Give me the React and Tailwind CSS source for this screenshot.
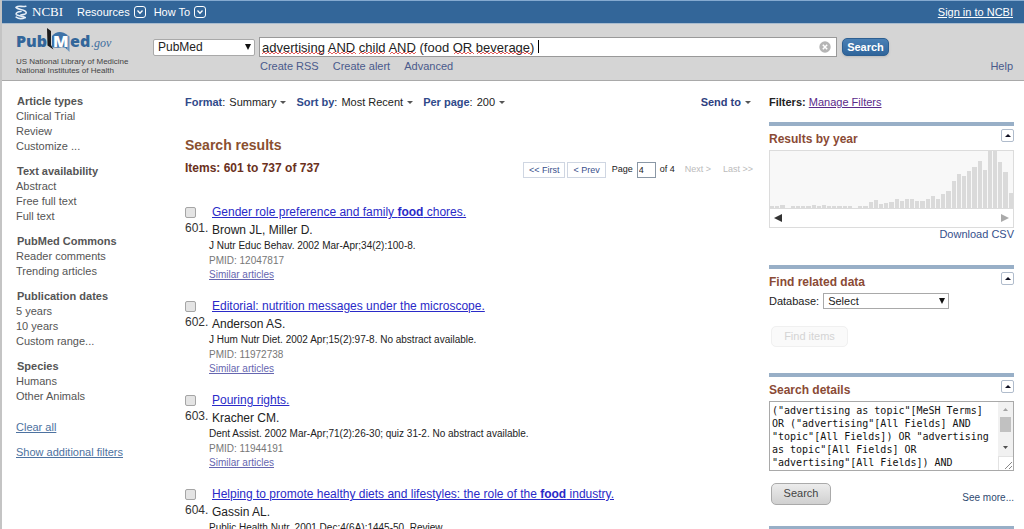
const filterGroups = [
  { title: "Article types", items: ["Clinical Trial", "Review", "Customize ..."] },
  { title: "Text availability", items: ["Abstract", "Free full text", "Full text"] },
  { title: "PubMed Commons", items: ["Reader comments", "Trending articles"] },
  { title: "Publication dates", items: ["5 years", "10 years", "Custom range..."] },
  { title: "Species", items: ["Humans", "Other Animals"] },
];

const articles = [
  {
    number: 601,
    title: ["Gender role preference and family ", "food", " chores."],
    authors: "Brown JL, Miller D.",
    citation: "J Nutr Educ Behav. 2002 Mar-Apr;34(2):100-8.",
    pmid: "12047817",
  },
  {
    number: 602,
    title: ["Editorial: nutrition messages under the microscope."],
    authors: "Anderson AS.",
    citation: "J Hum Nutr Diet. 2002 Apr;15(2):97-8. No abstract available.",
    pmid: "11972738",
  },
  {
    number: 603,
    title: ["Pouring rights."],
    authors: "Kracher CM.",
    citation: "Dent Assist. 2002 Mar-Apr;71(2):26-30; quiz 31-2. No abstract available.",
    pmid: "11944191",
  },
  {
    number: 604,
    title: [
      "Helping to promote healthy diets and lifestyles: the role of the ",
      "food",
      " industry.",
    ],
    authors: "Gassin AL.",
    citation: "Public Health Nutr. 2001 Dec;4(6A):1445-50. Review.",
  },
];

// one bar per year, oldest first
const yearCounts = [
  2, 2, 3, 0, 2, 2, 2, 2, 3, 2, 3, 2, 2, 2, 2, 2, 0, 2, 2, 6, 8, 4, 5, 6, 9, 7,
  9, 9, 7, 7, 9, 12, 9, 14, 17, 27, 34, 32, 37, 41, 47, 38, 57, 57, 46, 36, 15,
];
const maxCount = 57;

const searchDetails = `("advertising as topic"[MeSH Terms]
OR ("advertising"[All Fields] AND
"topic"[All Fields]) OR "advertising
as topic"[All Fields] OR
"advertising"[All Fields]) AND`;

// [start, end] of each word marked by the spell checker
const misspelled = [
  [3, 66],
  [69, 97],
  [100, 127],
  [131, 158],
  [195, 215],
  [218, 273],
];

function squiggle([start, end]) {
  let d = `M${start} 2`;
  for (let x = start + 2, up = true; x <= end; x += 2, up = !up) {
    d += `L${x} ${up ? 0 : 2}`;
  }
  return d;
}

function Caret() {
  return (
    <svg viewBox="0 0 6 3" className="ml-1 h-[3px] w-1.5" aria-hidden="true">
      <path d="M0 0h6L3 3z" fill="#555" />
    </svg>
  );
}

function SelectArrow() {
  return (
    <svg
      viewBox="0 0 6 6"
      className="pointer-events-none absolute top-1/2 right-1 size-1.5 -translate-y-1/2"
      aria-hidden="true"
    >
      <path d="M0 0h6L3 6z" fill="#111" />
    </svg>
  );
}

function MenuButton({ children }) {
  return (
    <button type="button" className="flex items-center gap-1 text-[11px] text-white">
      {children}
      <svg viewBox="0 0 12 12" className="size-3" fill="none" stroke="#fff" aria-hidden="true">
        <rect x="0.5" y="0.5" width="11" height="11" rx="2.5" />
        <path d="M3.5 4.5L6 7.2l2.5-2.7" strokeWidth="1.3" />
      </svg>
    </button>
  );
}

function NcbiLogo() {
  return (
    <a href="#ncbi" className="flex items-center gap-1 font-['Liberation_Serif',serif] text-[13px] text-white">
      <svg viewBox="0 0 14 16" className="h-4 w-3.5" fill="none" stroke="#e6eef7" strokeWidth="1.6" strokeLinecap="round" aria-hidden="true">
        <path d="M2.2 3.4C4.600 1 7.500 3.200 11.800 2.200" />
        <path d="M2.200 3.400C3.400 6 11.600 5 12.200 8.600c.2 1.700-2.700 2.200-5.400 2.400" />
        <path d="M7 7.500C4 7.600 1.700 8.800 2.200 10.300c.8 2 6.600 1.200 9 3.200" />
        <path d="M2.200 13.200c2.600 1.800 6.200 1.700 9 .3" />
      </svg>
      NCBI
    </a>
  );
}

function PubMedLogo() {
  return (
    <a href="#pubmed" className="block" aria-label="PubMed.gov">
      <svg viewBox="0 0 98 26" className="h-[26px] w-[98px]">
        <path d="M31 0l4 3v14l2.500 4.500-6-4z" fill="#1b1b1b" />
        <path d="M36 8c4-5 10-5.500 15.500-1v15c-2-2.500-4-3-7-2.500-3 .5-6 0-8.500 0z" fill="#3f73a8" />
        <path d="M51.500 7l2 1.500v15.500l-2-2z" fill="#6d95bd" />
        <text x="0" y="19" fontFamily="'Open Sans', sans-serif" fontWeight="800" fontSize="16" fill="#33669a">Pub</text>
        <text x="37" y="19" fontFamily="'Open Sans', sans-serif" fontWeight="800" fontSize="16" fill="#fff">M</text>
        <text x="54" y="19" fontFamily="'Open Sans', sans-serif" fontWeight="800" fontSize="16" fill="#33669a">ed</text>
        <text x="75" y="19" fontFamily="'Liberation Serif', serif" fontStyle="italic" fontSize="12" fill="#3f6f9f">.gov</text>
      </svg>
    </a>
  );
}

function Header() {
  return (
    <header className="border-b border-[#a9a9a9] bg-[#d5d5d5]">
      <div className="flex h-6 items-center justify-between border-y border-t-[#85aad0] border-b-[#a9bccf] bg-[#336699] pr-[11px] pl-3">
        <nav className="flex items-center">
          <NcbiLogo />
          <div className="ml-3.5 flex gap-2">
            <MenuButton>Resources</MenuButton>
            <MenuButton>How To</MenuButton>
          </div>
        </nav>
        <a href="#signin" className="text-[11px] text-white underline">
          Sign in to NCBI
        </a>
      </div>

      <div className="flex h-14 pr-[11px] pl-3.5">
        <div className="w-[137px] shrink-0 pt-1 text-[8px] leading-[9px] text-[#444]">
          <PubMedLogo />
          <p className="mt-[3px] whitespace-nowrap">US National Library of Medicine</p>
          <p className="whitespace-nowrap">National Institutes of Health</p>
        </div>

        <form className="flex-1 pt-[13px]" onSubmit={(e) => e.preventDefault()}>
          <div className="mr-[124px] flex items-center gap-1">
            <div className="relative w-[102px] shrink-0">
              <select
                aria-label="Database to search"
                className="block h-[17px] w-full appearance-none rounded-xs border border-[#a9a9a9] bg-white pl-1 text-xs leading-[15px] text-[#222]"
              >
                <option>PubMed</option>
              </select>
              <SelectArrow />
            </div>
            <div className="relative flex-1">
              <input
                type="text"
                aria-label="Search term"
                spellCheck={false}
                defaultValue="advertising AND child AND (food OR beverage)"
                className="block h-5 w-full border border-[#999] bg-white px-0.5 text-[13px] text-[#222] outline-none"
              />
              <svg className="pointer-events-none absolute inset-0 h-full w-full" aria-hidden="true">
                <g transform="translate(0 15)" fill="none" stroke="#e04848" strokeWidth="0.9">
                  {misspelled.map((word) => (
                    <path key={word[0]} d={squiggle(word)} />
                  ))}
                </g>
                <path d="M279.5 3v13" stroke="#000" />
              </svg>
              <button type="button" aria-label="Clear search" className="absolute top-1 right-1.5">
                <svg viewBox="0 0 12 12" className="size-3">
                  <circle cx="6" cy="6" r="5.7" fill="#b5b5b5" />
                  <path d="M3.8 3.8l4.4 4.4m0-4.4L3.8 8.2" stroke="#fff" strokeWidth="1.5" />
                </svg>
              </button>
            </div>
            <button
              type="submit"
              className="ml-px h-[18px] w-[47px] rounded-[5px] border border-[#2d5f91] bg-linear-to-b from-[#4a80b5] to-[#2f659b] text-[11px] leading-4 font-bold text-white shadow-sm"
            >
              Search
            </button>
          </div>
          <div className="flex pl-[107px] text-[11px] leading-[18px] text-[#4a5a8c]">
            <a href="#rss">Create RSS</a>
            <a href="#alert" className="ml-3.5">Create alert</a>
            <a href="#advanced" className="ml-3.5">Advanced</a>
            <a href="#help" className="ml-auto">Help</a>
          </div>
        </form>
      </div>
    </header>
  );
}

function Sidebar() {
  return (
    <aside className="w-[183px] shrink-0 pt-[13px] pl-3.5 text-[11px] leading-[15px] text-[#555]">
      {filterGroups.map((group) => (
        <section key={group.title} className="mb-2.5">
          <h3 className="pl-px font-bold">{group.title}</h3>
          <ul>
            {group.items.map((item) => (
              <li key={item}>
                <a href="#filter">{item}</a>
              </li>
            ))}
          </ul>
        </section>
      ))}
      <div className="mt-4 space-y-2.5 text-[#4d72a0] underline">
        <p><a href="#clear">Clear all</a></p>
        <p><a href="#more">Show additional filters</a></p>
      </div>
    </aside>
  );
}

function DisplayOption({ label, value }) {
  return (
    <button type="button" className="flex items-center">
      <span className="mr-1">
        <b className="text-[#2f4a8a]">{label}</b>:
      </span>
      {value}
      <Caret />
    </button>
  );
}

function Pager() {
  return (
    <nav className="mt-1 flex h-4 items-center text-[9px] text-[#222]">
      <a href="#first" className="border border-[#cfd6e2] px-[5px] leading-[14px] text-[#3a4f8c]">&lt;&lt; First</a>
      <a href="#prev" className="ml-0.5 border border-[#cfd6e2] px-[5px] leading-[14px] text-[#3a4f8c]">&lt; Prev</a>
      <label htmlFor="page" className="ml-1.5">Page</label>
      <input id="page" type="text" defaultValue="4" className="mx-1 h-4 w-[19px] border border-[#8a97a5] bg-white px-px" />
      of 4
      <span className="ml-2.5 text-[#bbb]">Next &gt;</span>
      <span className="ml-3 text-[#bbb]">Last &gt;&gt;</span>
    </nav>
  );
}

function Article({ article }) {
  const [before, match, after] = article.title;

  return (
    <li className="flex">
      <label className="w-6 shrink-0 text-xs text-[#333]">
        <input
          type="checkbox"
          className="mt-[5px] block size-[11px] appearance-none rounded-xs border border-[#a5a5a5] bg-[#e4e4e4]"
        />
        <span className="block leading-5">{article.number}.</span>
      </label>
      <div>
        <h4 className="pl-[3px] text-xs leading-5">
          <a href="#article" className="text-[#2a2ac8] underline">
            {before}
            {match && <b>{match}</b>}
            {after}
          </a>
        </h4>
        <p className="pl-[3px] text-xs leading-4 text-[#222]">{article.authors}</p>
        <div className="text-[10px] leading-[15px] text-[#222]">
          <p>{article.citation}</p>
          {article.pmid && (
            <>
              <p className="text-[#777]">PMID: {article.pmid}</p>
              <p className="leading-[14px]">
                <a href="#similar" className="text-[#6666b0] underline">Similar articles</a>
              </p>
            </>
          )}
        </div>
      </div>
    </li>
  );
}

function Results() {
  return (
    <main className="min-w-0 flex-1 pt-[13px]">
      <div className="flex gap-2.5 text-[11px] leading-4 text-[#222]">
        <DisplayOption label="Format" value="Summary" />
        <DisplayOption label="Sort by" value="Most Recent" />
        <DisplayOption label="Per page" value="200" />
        <button type="button" className="mr-0.5 ml-auto flex items-center font-bold text-[#2f3f80]">
          Send to
          <Caret />
        </button>
      </div>

      <h2 className="mt-[25px] text-sm leading-5 font-bold text-[#8a5030]">Search results</h2>
      <div className="mt-[3px] flex justify-between">
        <h3 className="text-xs leading-5 font-bold text-[#6a3020]">Items: 601 to 737 of 737</h3>
        <Pager />
      </div>

      <ul className="mt-6 space-y-3.5">
        {articles.map((article) => (
          <Article key={article.number} article={article} />
        ))}
      </ul>
    </main>
  );
}

function Portlet({ title, children }) {
  return (
    <section className="border-t-4 border-[#98afc7] pt-0.5">
      <div className="flex items-start justify-between">
        <h3 className="text-xs leading-[22px] font-bold text-[#8a4a35]">{title}</h3>
        <button
          type="button"
          aria-label={`Collapse ${title}`}
          className="mt-px flex size-[13px] items-center justify-center rounded-xs border border-[#b0bccc] bg-white"
        >
          <svg viewBox="0 0 6 3" className="h-[3px] w-1.5">
            <path d="M0 3h6L3 0z" fill="#112" />
          </svg>
        </button>
      </div>
      {children}
    </section>
  );
}

function YearChart() {
  return (
    <div className="border border-[#dcdcdc]">
      <div className="flex h-[58px] items-end gap-px border-b border-[#dcdcdc] bg-[#f8f8f8]">
        {yearCounts.map((count, i) => (
          <div
            key={i}
            className="flex-1 bg-[#dadada]"
            style={{ height: `${(count / maxCount) * 100}%` }}
          />
        ))}
      </div>
      <div className="flex h-[18px] items-center justify-between px-1">
        <button type="button" aria-label="Earlier years">
          <svg viewBox="0 0 8 8" className="size-2"><path d="M8 0v8L0 4z" fill="#333" /></svg>
        </button>
        <button type="button" aria-label="Later years">
          <svg viewBox="0 0 8 8" className="size-2"><path d="M0 0v8l8-4z" fill="#aaa" /></svg>
        </button>
      </div>
    </div>
  );
}

function RightColumn() {
  return (
    <aside className="mr-2.5 ml-4 w-[245px] shrink-0 pt-[13px] text-[11px] text-[#222]">
      <p className="mb-3 leading-4">
        <b>Filters:</b>{" "}
        <a href="#filters" className="text-[#5a2a8a] underline">Manage Filters</a>
      </p>

      <Portlet title="Results by year">
        <YearChart />
        <p className="mb-6 text-right leading-[13px]">
          <a href="#csv" className="text-[#35508c]">Download CSV</a>
        </p>
      </Portlet>

      <Portlet title="Find related data">
        <div className="flex items-center gap-1">
          <label htmlFor="related">Database:</label>
          <div className="relative w-[126px]">
            <select
              id="related"
              className="block h-4 w-full appearance-none border border-[#a9a9a9] bg-white pl-1 text-[11px] leading-[14px]"
            >
              <option>Select</option>
            </select>
            <SelectArrow />
          </div>
        </div>
        <button
          type="button"
          disabled
          className="mt-4 mb-[26px] ml-0.5 block h-[21px] w-[77px] rounded-[5px] border border-[#f0f0f0] bg-[#fafafa] text-[11px] text-[#d4d4d4]"
        >
          Find items
        </button>
      </Portlet>

      <Portlet title="Search details">
        <div className="flex h-[70px] border border-[#a9a9a9]">
          <textarea
            aria-label="Search details"
            defaultValue={searchDetails}
            className="min-w-0 flex-1 resize-none overflow-hidden pt-0.5 pl-0.5 font-['DejaVu_Sans_Mono',monospace] text-[10px] leading-[13px] whitespace-pre text-[#111]"
          />
          <svg viewBox="0 0 15 68" className="h-[68px] w-[15px]" aria-hidden="true">
            <path d="M0 0h15v54H0z" fill="#f1f1f1" />
            <path d="M5 9h5L7.5 6z" fill="#a3a3a3" />
            <path d="M2 15h11v15H2z" fill="#c1c1c1" />
            <path d="M5 44h5l-2.5 3z" fill="#505050" />
            <path d="M0 54.5h15M.5 54v14" stroke="#e2e2e2" />
            <path d="M7 67l7-7M11 67l3-3" stroke="#888" fill="none" />
          </svg>
        </div>
        <div className="mt-3 mb-[21px] flex items-end justify-between pl-0.5">
          <button
            type="button"
            className="h-[22px] w-[60px] rounded-[5px] border border-[#aaa] bg-linear-to-b from-[#ececec] to-[#d0d0d0] text-[11px] text-[#444]"
          >
            Search
          </button>
          <a href="#details" className="text-[10px] text-[#2f4a70]">See more...</a>
        </div>
      </Portlet>

      <div className="border-t-4 border-[#98afc7]" />
    </aside>
  );
}

export default function App() {
  return (
    <div className="h-screen overflow-hidden border-l-2 border-[#c4c4c4] bg-white font-['Liberation_Sans',Arial,sans-serif]">
      <Header />
      <div className="flex">
        <Sidebar />
        <Results />
        <RightColumn />
      </div>
    </div>
  );
}
